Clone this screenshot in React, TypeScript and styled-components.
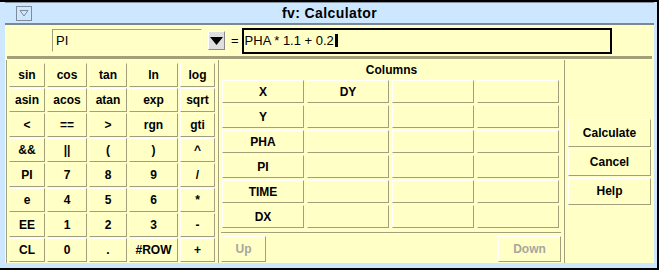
import React from 'react';
import styled, { createGlobalStyle, css } from 'styled-components';

const yellow = '#ffffc6';
const olive = '#a39f7b';
const sky = '#cde7ff';

const GlobalStyle = createGlobalStyle`
  html, body {
    margin: 0;
    padding: 0;
    background: #000;
  }
  * {
    box-sizing: border-box;
  }
`;

const raised = css`
  border-top: 1px solid #fff;
  border-left: 1px solid #fff;
  border-bottom: 1px solid ${olive};
  border-right: 1px solid ${olive};
`;

const Frame = styled.div`
  width: 659px;
  height: 270px;
  display: flex;
  flex-direction: column;
  background: ${sky};
  border-top: 2px solid #000;
  border-right: 2px solid #000;
  border-bottom: 2px solid #000;
  padding: 0 3px 5px 5px;
  font-family: 'Liberation Sans', Arial, sans-serif;
  color: #000;
`;

const TitleBar = styled.div`
  height: 23px;
  display: grid;
  grid-template-columns: 1fr auto 1fr;
  align-items: center;
  border-top: 1px solid #8593a0;
  border-bottom: 2px solid #7a8794;
`;

const MenuButton = styled.div`
  width: 16px;
  height: 15px;
  margin-left: 11px;
  border: 1px solid #7f8c98;
  display: flex;
  align-items: center;
  justify-content: center;
`;

const Title = styled.div`
  font-size: 14px;
  font-weight: bold;
  letter-spacing: 0.4px;
`;

const Body = styled.div`
  height: 238px;
  background: ${yellow};
  display: flex;
  flex-direction: column;
`;

const TopRow = styled.div`
  height: 31px;
  display: flex;
  align-items: center;
  padding-left: 47px;
`;

const NameField = styled.div`
  width: 150px;
  height: 23px;
  border-top: 1px solid ${olive};
  border-left: 1px solid ${olive};
  border-bottom: 1px solid #fff;
  border-right: 1px solid #fff;
  font-size: 13px;
  display: flex;
  align-items: center;
  padding-left: 3px;
`;

const DropButton = styled.div`
  width: 17px;
  height: 19px;
  margin-left: 6px;
  background: #dedede;
  border-top: 1px solid #fff;
  border-left: 1px solid #fff;
  border-bottom: 1px solid #8a8a8a;
  border-right: 1px solid #8a8a8a;
  display: flex;
  align-items: center;
  justify-content: center;
`;

const Equals = styled.span`
  font-size: 13px;
  margin: 0 3px 0 6px;
`;

const ExprField = styled.div`
  width: 370px;
  height: 26px;
  border: 2px solid #000;
  font-size: 13px;
  white-space: pre;
  display: flex;
  align-items: center;
  padding-left: 1px;
`;

const Caret = styled.span`
  display: inline-block;
  width: 3px;
  height: 13px;
  margin-left: 1px;
  background: #000;
`;

const Rule = styled.div`
  height: 4px;
  margin: 0 2px;
  background: ${olive};
  border-bottom: 1px solid #fff;
`;

const Panels = styled.div`
  height: 203px;
  display: flex;
`;

const Keypad = styled.div`
  width: 212px;
  margin-left: 1px;
  border-left: 1px solid ${olive};
  box-shadow: inset 1px 0 0 #fff;
  padding: 3px 0 0 2px;
  display: grid;
  grid-template-columns: 36px 40px 38px 49px 35px;
  grid-auto-rows: 24px;
  gap: 1px 2px;
  align-content: start;
`;

const Key = styled.button<{ $muted?: boolean; $width?: number; $height?: number }>`
  ${raised};
  background: ${yellow};
  margin: 0;
  padding: 0;
  font-family: inherit;
  font-size: 12px;
  font-weight: bold;
  color: ${(p) => (p.$muted ? '#a8a6a0' : '#000')};
  width: ${(p) => (p.$width ? `${p.$width}px` : 'auto')};
  height: ${(p) => (p.$height ? `${p.$height}px` : 'auto')};
  display: flex;
  align-items: center;
  justify-content: center;
`;

const ColumnsPanel = styled.div`
  width: 347px;
  border-left: 1px solid ${olive};
  border-right: 1px solid ${olive};
  box-shadow: inset 1px 0 0 #fff, inset -1px 0 0 #fff;
  padding: 0 2px 0 2px;
  display: flex;
  flex-direction: column;
`;

const PanelHeading = styled.div`
  height: 20px;
  font-size: 12px;
  font-weight: bold;
  display: flex;
  align-items: center;
  justify-content: center;
`;

const ColumnGrid = styled.div`
  margin-left: 1px;
  display: grid;
  grid-template-columns: repeat(4, 82px);
  grid-auto-rows: 23px;
  gap: 2px 3px;
`;

const InnerRule = styled.div`
  height: 2px;
  margin: 4px 1px 0 0;
  background: ${olive};
  border-bottom: 1px solid #fff;
`;

const PagerRow = styled.div`
  margin-top: 2px;
  display: flex;
  justify-content: space-between;
  padding-right: 1px;
`;

const ActionPanel = styled.div`
  flex: 1;
  padding: 0 3px;
  display: flex;
  flex-direction: column;
  justify-content: center;
  gap: 2px;
`;

const keys = [
  ['sin', 'cos', 'tan', 'ln', 'log'],
  ['asin', 'acos', 'atan', 'exp', 'sqrt'],
  ['<', '==', '>', 'rgn', 'gti'],
  ['&&', '||', '(', ')', '^'],
  ['PI', '7', '8', '9', '/'],
  ['e', '4', '5', '6', '*'],
  ['EE', '1', '2', '3', '-'],
  ['CL', '0', '.', '#ROW', '+'],
];

const columnNames = ['X', 'Y', 'PHA', 'PI', 'TIME', 'DX'];

export default function App() {
  return (
    <>
      <GlobalStyle />
      <Frame>
        <TitleBar>
          <MenuButton>
            <svg width="10" height="8" viewBox="0 0 10 8">
              <path d="M1 1.5 H9 L5 7 Z" fill="none" stroke="#7f8c98" strokeWidth="1" />
            </svg>
          </MenuButton>
          <Title>fv: Calculator</Title>
          <span />
        </TitleBar>
        <Body>
          <TopRow>
            <NameField>PI</NameField>
            <DropButton>
              <svg width="13" height="8" viewBox="0 0 13 8">
                <path d="M0 0 H13 L6.5 8 Z" fill="#000" />
              </svg>
            </DropButton>
            <Equals>=</Equals>
            <ExprField>
              {'PHA * 1.1 + 0.2'}
              <Caret />
            </ExprField>
          </TopRow>
          <Rule />
          <Panels>
            <Keypad>
              {keys.flat().map((k, i) => (
                <Key key={i}>{k}</Key>
              ))}
            </Keypad>
            <ColumnsPanel>
              <PanelHeading>Columns</PanelHeading>
              <ColumnGrid>
                {columnNames.map((name, r) =>
                  [0, 1, 2, 3].map((c) => (
                    <Key key={`${r}-${c}`}>
                      {c === 0 ? name : r === 0 && c === 1 ? 'DY' : ''}
                    </Key>
                  ))
                )}
              </ColumnGrid>
              <InnerRule />
              <PagerRow>
                <Key $muted $width={45} $height={26}>
                  Up
                </Key>
                <Key $muted $width={63} $height={26}>
                  Down
                </Key>
              </PagerRow>
            </ColumnsPanel>
            <ActionPanel>
              <Key $height={28}>Calculate</Key>
              <Key $height={27}>Cancel</Key>
              <Key $height={27}>Help</Key>
            </ActionPanel>
          </Panels>
        </Body>
      </Frame>
    </>
  );
}
